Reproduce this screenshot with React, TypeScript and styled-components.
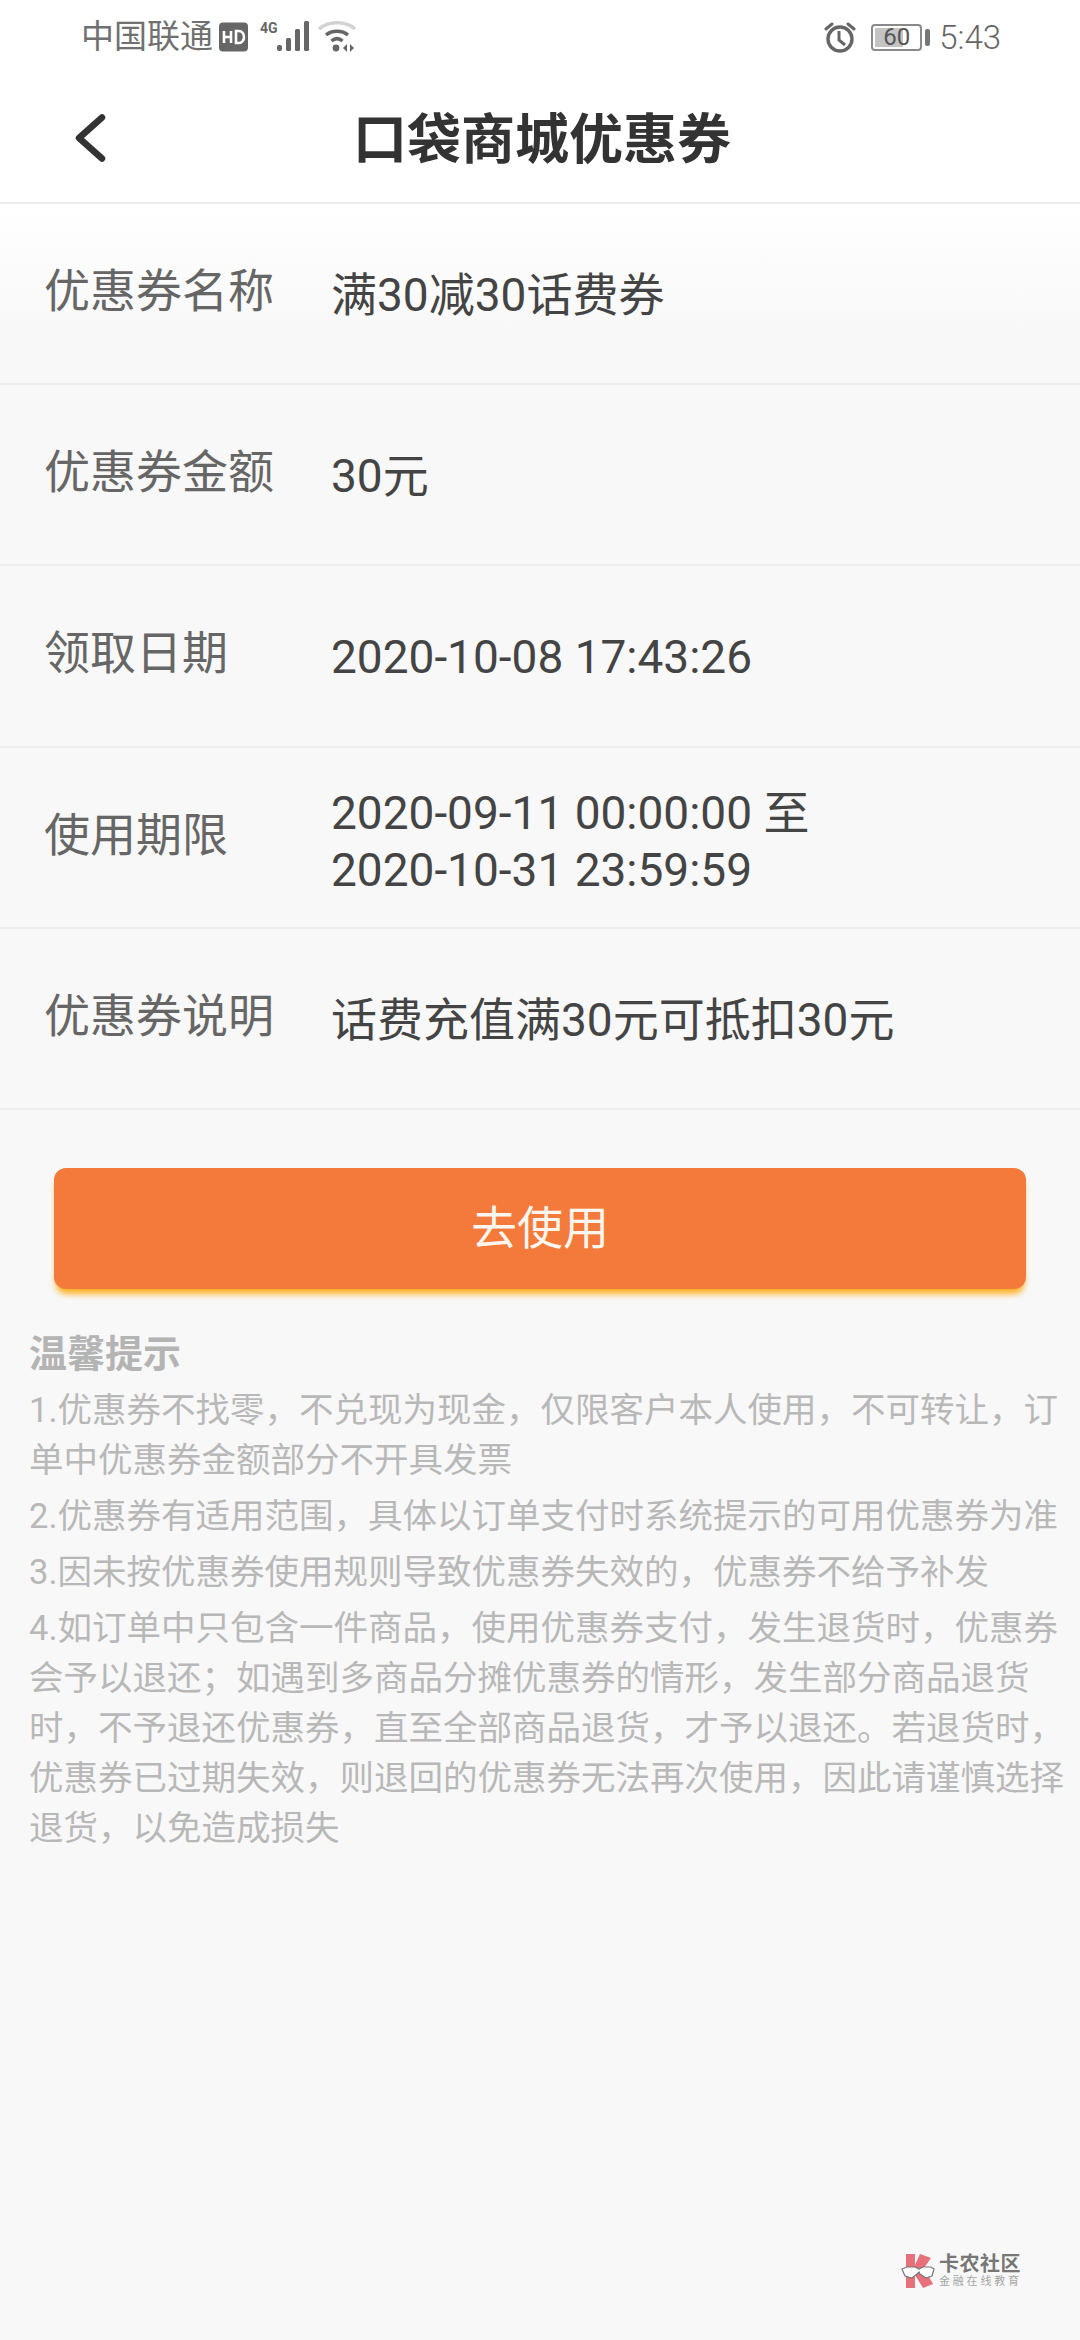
import React from 'react';
import styled, { createGlobalStyle } from 'styled-components';

const GlobalStyle = createGlobalStyle`
  html, body {
    margin: 0;
    padding: 0;
    background: #f8f8f8;
    font-family: Roboto, "Noto Sans CJK SC", sans-serif;
  }
`;

const Page = styled.main`
  position: relative;
  display: flex;
  flex-direction: column;
  width: 1080px;
  height: 2340px;
  overflow: hidden;
  background: #f8f8f8;
`;

const TopArea = styled.header`
  background: #fff;
  border-bottom: 2px solid #ececec;
`;

const StatusBar = styled.div`
  display: flex;
  align-items: center;
  justify-content: space-between;
  height: 74px;
  padding: 0 79px 0 81px;
  color: #666;
`;

const StatusGroup = styled.div`
  display: flex;
  align-items: center;
`;

const Carrier = styled.span`
  font-size: 33px;
  font-weight: 400;
  color: #707070;
  line-height: 40px;
  margin-right: 6px;
`;

const Clock = styled.span`
  font-size: 33px;
  font-weight: 300;
  margin-left: 9px;
`;

const Battery = styled.div`
  position: relative;
  box-sizing: border-box;
  width: 51px;
  height: 27px;
  margin-left: 15px;
  border: 2px solid #8a8a8a;
  border-radius: 4px;
  font-size: 24px;
  line-height: 23px;
  text-align: center;
  color: #555;
  z-index: 0;

  &::before {
    content: '';
    position: absolute;
    left: 2px;
    top: 2px;
    bottom: 2px;
    width: 60%;
    background: #c4c4c4;
    z-index: -1;
  }
`;

const BatteryTip = styled.div`
  width: 5px;
  height: 17px;
  margin-left: 3px;
  border-radius: 2px;
  background: #777;
`;

const NavBar = styled.div`
  position: relative;
  display: flex;
  align-items: center;
  justify-content: center;
  height: 128px;
`;

const BackIcon = styled.svg`
  position: absolute;
  left: 72px;
  top: 39px;
`;

const Title = styled.h1`
  margin: 0;
  font-size: 54px;
  font-weight: 700;
  color: #333;
  line-height: 60px;
  transform: translate(2px, 3px);
`;

const Row = styled.section<{ $first?: boolean }>`
  display: flex;
  align-items: center;
  box-sizing: border-box;
  height: 181.2px;
  border-bottom: 2px solid #eeeeee;
  background: ${(p) => (p.$first ? 'linear-gradient(#fff, #f8f8f8 70%)' : 'transparent')};
`;

const Label = styled.div`
  flex: 0 0 287px;
  padding-left: 44px;
  font-size: 46px;
  font-weight: 400;
  color: #666;
  line-height: 56px;
  margin-top: -5px;
`;

const Value = styled.div<{ $multi?: boolean }>`
  font-size: 46px;
  color: #444;
  line-height: 57px;
  margin-top: ${(p) => (p.$multi ? '9px' : '4px')};
`;

const UseButton = styled.button`
  display: block;
  width: 972px;
  height: 121px;
  margin: 58px 0 0 54px;
  padding: 0;
  border: 0;
  border-radius: 12px;
  background: #f37a3a;
  box-shadow: 0 7px 6px -2px #ffb020;
  color: #fdf6ef;
  font: 400 46px/115px Roboto, "Noto Sans CJK SC", sans-serif;
`;

const Tips = styled.section`
  padding: 40px 14px 0 29px;
  color: #b8b8b8;
`;

const TipsTitle = styled.h2`
  margin: 0 0 6px;
  font-size: 38px;
  font-weight: 700;
  line-height: 50px;
  color: #b4b4b4;
`;

const TipLine = styled.p`
  margin: 0 0 6px;
  font-size: 34.5px;
  line-height: 50px;
`;

const Watermark = styled.div`
  position: absolute;
  left: 901px;
  top: 2253px;
  display: flex;
  align-items: center;
  gap: 4px;
`;

const WatermarkText = styled.div`
  display: flex;
  flex-direction: column;
`;

const WatermarkName = styled.span`
  font-size: 20px;
  line-height: 22px;
  font-weight: 700;
  color: #777;
  letter-spacing: 0.5px;
`;

const WatermarkSub = styled.span`
  font-size: 11px;
  line-height: 14px;
  color: #a5a5a5;
  letter-spacing: 2.8px;
`;

const rows: { label: string; value: React.ReactNode; multi?: boolean }[] = [
  { label: '优惠券名称', value: '满30减30话费券' },
  { label: '优惠券金额', value: '30元' },
  { label: '领取日期', value: '2020-10-08 17:43:26' },
  {
    label: '使用期限',
    multi: true,
    value: (
      <>
        2020-09-11 00:00:00 至
        <br />
        2020-10-31 23:59:59
      </>
    ),
  },
  { label: '优惠券说明', value: '话费充值满30元可抵扣30元' },
];

const tips = [
  '1.优惠券不找零，不兑现为现金，仅限客户本人使用，不可转让，订单中优惠券金额部分不开具发票',
  '2.优惠券有适用范围，具体以订单支付时系统提示的可用优惠券为准',
  '3.因未按优惠券使用规则导致优惠券失效的，优惠券不给予补发',
  '4.如订单中只包含一件商品，使用优惠券支付，发生退货时，优惠券会予以退还；如遇到多商品分摊优惠券的情形，发生部分商品退货时，不予退还优惠券，直至全部商品退货，才予以退还。若退货时，优惠券已过期失效，则退回的优惠券无法再次使用，因此请谨慎选择退货，以免造成损失',
];

const App: React.FC = () => {
  return (
    <Page>
      <GlobalStyle />
      <TopArea>
        <StatusBar>
          <StatusGroup>
            <Carrier>中国联通</Carrier>
            <svg width="30" height="30" viewBox="0 0 30 30">
              <rect width="29" height="29" y="0.5" rx="4" fill="#666" />
              <path d="M5 9v12M5 15h7M12 9v12M17 9v12h3a5 6 0 0 0 0-12z" fill="none" stroke="#fff" strokeWidth="2.6" />
            </svg>
            <svg width="52" height="34" viewBox="0 0 52 34" style={{ marginLeft: 11 }}>
              <text x="0" y="13" fontSize="14" fontWeight="700" fill="#666" fontFamily="Roboto">4G</text>
              <rect x="17" y="25" width="5" height="6" rx="2" fill="#666" />
              <rect x="26" y="18" width="5" height="13" rx="1.5" fill="#666" />
              <rect x="35" y="9" width="5" height="22" rx="1.5" fill="#666" />
              <rect x="44" y="1" width="5" height="30" rx="1.5" fill="#666" />
            </svg>
            <svg width="38" height="34" viewBox="0 0 38 34" style={{ marginLeft: 6 }}>
              <path d="M1 9C10 0.5 28 0.5 37 9" fill="none" stroke="#d2d2d2" strokeWidth="3.5" />
              <path d="M8 15C14 10 24 10 30 15" fill="none" stroke="#666" strokeWidth="3.5" />
              <path d="M13.5 21C17 18 21 18 24.5 21" fill="none" stroke="#666" strokeWidth="3.5" />
              <circle cx="18" cy="28" r="3.4" fill="#666" />
              <path d="M29 24v8l-4-4zM32 24v8l4-4z" fill="#666" />
            </svg>
          </StatusGroup>
          <StatusGroup>
            <svg width="32" height="34" viewBox="0 0 32 34">
              <circle cx="16" cy="19" r="12" fill="none" stroke="#666" strokeWidth="3.4" />
              <path d="M15 11v9l6 5" fill="none" stroke="#666" strokeWidth="3" />
              <path d="M2 9l6-5M30 9l-6-5" fill="none" stroke="#666" strokeWidth="3" strokeLinecap="round" />
            </svg>
            <Battery>60</Battery>
            <BatteryTip />
            <Clock>5:43</Clock>
          </StatusGroup>
        </StatusBar>
        <NavBar>
          <BackIcon width="34" height="52" viewBox="0 0 34 52">
            <path d="M30 4.5L7 25l23 20.5" fill="none" stroke="#333" strokeWidth="6.5" strokeLinecap="round" strokeLinejoin="round" />
          </BackIcon>
          <Title>口袋商城优惠券</Title>
        </NavBar>
      </TopArea>

      {rows.map((row, i) => (
        <Row key={row.label} $first={i === 0}>
          <Label>{row.label}</Label>
          <Value $multi={row.multi}>{row.value}</Value>
        </Row>
      ))}

      <UseButton>去使用</UseButton>

      <Tips>
        <TipsTitle>温馨提示</TipsTitle>
        {tips.map((t) => (
          <TipLine key={t}>{t}</TipLine>
        ))}
      </Tips>

      <Watermark>
        <svg width="34" height="36" viewBox="0 0 34 36">
          <path d="M5 1h9v11l5-11 11 4-7 10 9 16-10 4-8-13v13H5z" fill="#e8707a" />
          <path d="M1 16l5-2h8l4 2 4-2h8l3 2-2 7-6 2-6-4-1-2-2 2-5 4-7-2z" fill="#fff" stroke="#777" strokeWidth="1.2" />
        </svg>
        <WatermarkText>
          <WatermarkName>卡农社区</WatermarkName>
          <WatermarkSub>金融在线教育</WatermarkSub>
        </WatermarkText>
      </Watermark>
    </Page>
  );
};

export default App;
